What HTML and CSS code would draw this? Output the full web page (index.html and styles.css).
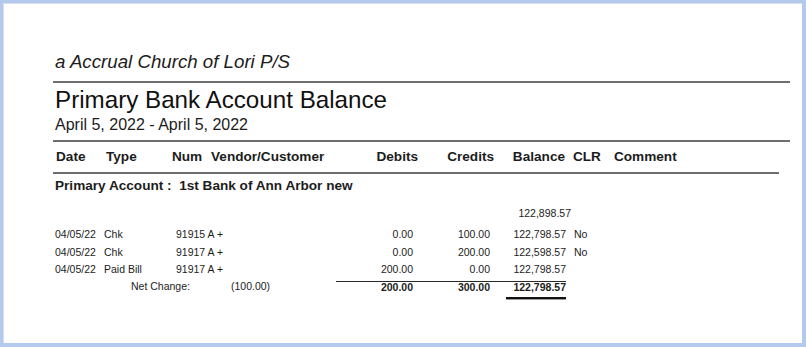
FILE: index.html
```html
<!DOCTYPE html>
<html lang="en">
<head>
<meta charset="utf-8">
<title>Primary Bank Account Balance</title>
<link rel="stylesheet" href="styles.css">
</head>
<body>
<div class="sheet">
  <div class="report">
    <div class="company">a Accrual Church of Lori P/S</div>
    <h1 class="title">Primary Bank Account Balance</h1>
    <div class="period">April 5, 2022 - April 5, 2022</div>

    <div class="head-wrap">
      <div class="head-row">
        <div class="h-date">Date</div>
        <div>Type</div>
        <div>Num</div>
        <div>Vendor/Customer</div>
        <div class="num">Debits</div>
        <div class="num">Credits</div>
        <div class="num">Balance</div>
        <div class="h-clr">CLR</div>
        <div>Comment</div>
      </div>
    </div>

    <div class="section">Primary Account :&nbsp; 1st Bank of Ann Arbor new</div>

    <div class="rows">
      <div class="row open-row">
        <div class="c-bal num open">122,898.57</div>
      </div>
      <div class="row">
        <div class="c-date">04/05/22</div>
        <div>Chk</div>
        <div>91915 A +</div>
        <div class="num">0.00</div>
        <div class="num">100.00</div>
        <div class="num">122,798.57</div>
        <div class="c-clr">No</div>
      </div>
      <div class="row">
        <div class="c-date">04/05/22</div>
        <div>Chk</div>
        <div>91917 A +</div>
        <div class="num">0.00</div>
        <div class="num">200.00</div>
        <div class="num">122,598.57</div>
        <div class="c-clr">No</div>
      </div>
      <div class="row">
        <div class="c-date">04/05/22</div>
        <div>Paid Bill</div>
        <div>91917 A +</div>
        <div class="num">200.00</div>
        <div class="num">0.00</div>
        <div class="num">122,798.57</div>
        <div class="c-clr"></div>
      </div>
      <div class="row total-row">
        <div class="net"><span class="net-label">Net Change:</span><span>(100.00)</span></div>
        <div class="num tot">200.00</div>
        <div class="num tot">300.00</div>
        <div class="num tot"><span class="dbl">122,798.57</span></div>
        <div class="c-clr"></div>
      </div>
    </div>
  </div>
</div>
</body>
</html>
```

FILE: styles.css
```css
html, body {
  margin: 0;
  padding: 0;
}

body {
  background: #b4c9ee;
  width: 806px;
  height: 347px;
  overflow: hidden;
  font-family: "Liberation Sans", Arial, sans-serif;
  color: #1c1c1c;
}

.sheet {
  margin: 3px 4px 4px 3px;
  height: 340px;
  background: #ffffff;
  box-shadow: inset 1px 1px 0 #d9dde6;
  padding-top: 49px;
  box-sizing: border-box;
}

.report {
  margin-left: 50px;
  width: 737px;
}

.company {
  font-style: italic;
  font-size: 18.7px;
  line-height: 20px;
  padding-left: 2px;
  padding-bottom: 9px;
  border-bottom: 2px solid #6e6e6e;
}

.title {
  margin: 4px 0 0;
  padding-left: 2px;
  font-weight: normal;
  font-size: 24.2px;
  line-height: 26px;
  color: #111;
}

.period {
  margin-top: 3px;
  padding-left: 2px;
  font-size: 16px;
  line-height: 18px;
}

.head-wrap {
  margin-top: 6px;
  border-top: 2px solid #6e6e6e;
}

.head-row {
  margin-right: 11px;
  display: grid;
  grid-template-columns: 53px 66px 39px 129px 78px 76px 71px 49px 1fr;
  font-weight: bold;
  font-size: 13.6px;
  line-height: 30px;
  border-bottom: 2px solid #6e6e6e;
  white-space: nowrap;
}

.h-date { padding-left: 3px; }
.h-clr { padding-left: 8px; }

.num { text-align: right; }

.section {
  margin-top: 3px;
  padding-left: 2px;
  font-weight: bold;
  font-size: 13.6px;
  line-height: 18px;
}

.rows {
  margin-top: 10px;
  font-size: 10.5px;
}

.row {
  display: grid;
  grid-template-columns: 51px 72px 160px 77px 77px 76px 60px;
  line-height: 17.5px;
  white-space: nowrap;
}

.open-row {
  margin-bottom: 3.5px;
}

.open-row .c-bal {
  grid-column: 6;
  margin-right: -5px;
}

.c-date { padding-left: 2px; }
.c-clr { padding-left: 8px; }

.total-row {
  margin-top: 2px;
  line-height: 11px;
}

.net {
  grid-column: 1 / 4;
  padding-left: 78px;
  display: flex;
}

.net-label {
  width: 100px;
}

.tot {
  font-weight: bold;
  border-top: 1px solid #2a2a2a;
}

.dbl {
  display: inline-block;
  width: 60px;
  padding-bottom: 4px;
  border-bottom: 2px solid #111;
  box-shadow: 0 1px 0 #9a9a9a;
}
```
